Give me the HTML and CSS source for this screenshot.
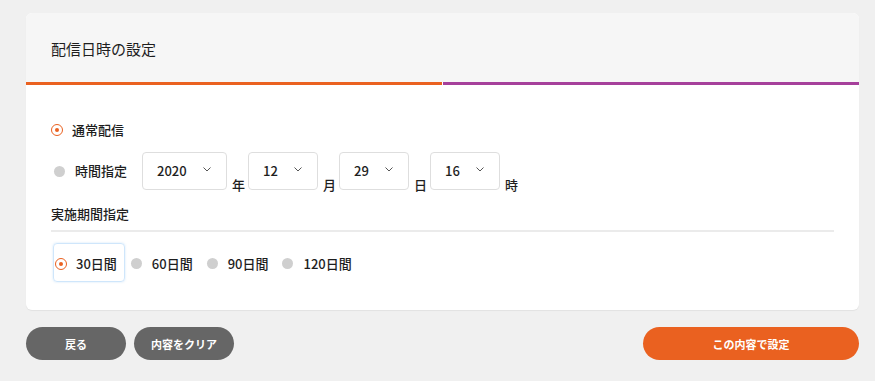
FILE: index.html
```html
<!DOCTYPE html>
<html lang="ja">
<head>
<meta charset="utf-8">
<title>配信日時の設定</title>
<link rel="stylesheet" href="styles.css">
</head>
<body>
<div class="page">
  <section class="card">
    <header class="card-head">配信日時の設定</header>
    <div class="progress"><span class="seg seg-orange"></span><span class="seg seg-purple"></span></div>
    <div class="card-body">
      <div class="row row-normal">
        <span class="radio radio-on"></span><span class="label">通常配信</span>
      </div>
      <div class="row row-time">
        <div class="time-label">
          <span class="radio radio-off"></span><span class="label">時間指定</span>
        </div>
        <div class="select sel-year"><span>2020</span><svg class="chev" width="8" height="5" viewBox="0 0 8 5"><polyline points="0.5,0.5 4,4 7.5,0.5" fill="none" stroke="#555" stroke-width="1"/></svg></div>
        <span class="unit">年</span>
        <div class="select sel-small"><span>12</span><svg class="chev" width="8" height="5" viewBox="0 0 8 5"><polyline points="0.5,0.5 4,4 7.5,0.5" fill="none" stroke="#555" stroke-width="1"/></svg></div>
        <span class="unit">月</span>
        <div class="select sel-small"><span>29</span><svg class="chev" width="8" height="5" viewBox="0 0 8 5"><polyline points="0.5,0.5 4,4 7.5,0.5" fill="none" stroke="#555" stroke-width="1"/></svg></div>
        <span class="unit">日</span>
        <div class="select sel-small"><span>16</span><svg class="chev" width="8" height="5" viewBox="0 0 8 5"><polyline points="0.5,0.5 4,4 7.5,0.5" fill="none" stroke="#555" stroke-width="1"/></svg></div>
        <span class="unit">時</span>
      </div>
      <div class="section-title">実施期間指定</div>
      <div class="divider"></div>
      <div class="periods">
        <label class="period focused"><span class="radio radio-on"></span><span class="label">30日間</span></label>
        <label class="period"><span class="radio radio-off"></span><span class="label">60日間</span></label>
        <label class="period"><span class="radio radio-off"></span><span class="label">90日間</span></label>
        <label class="period"><span class="radio radio-off"></span><span class="label">120日間</span></label>
      </div>
    </div>
  </section>
  <div class="actions">
    <div class="actions-left">
      <button class="btn btn-grey">戻る</button>
      <button class="btn btn-grey">内容をクリア</button>
    </div>
    <button class="btn btn-orange">この内容で設定</button>
  </div>
</div>
</body>
</html>
```
FILE: styles.css
```css
* { box-sizing: border-box; }
html, body { margin: 0; padding: 0; }
body {
  background: #f0f0f0;
  font-family: "Noto Sans CJK JP", "Noto Sans", sans-serif;
  color: #1e1e1e;
  width: 875px;
  height: 381px;
  overflow: hidden;
}
.page {
  padding: 13px 16px 0 26px;
}
.card {
  background: #fff;
  border-radius: 6px;
  overflow: hidden;
  box-shadow: 0 1px 1px rgba(0,0,0,0.06);
}
.card-head {
  height: 69px;
  background: #f6f6f6;
  padding-left: 25px;
  display: flex;
  align-items: center;
  font-size: 15px;
  padding-top: 1px;
}
.progress {
  display: flex;
  gap: 1px;
  height: 3px;
  background: #fff;
}
.seg { flex: 1; display: block; }
.seg-orange { background: #ea6120; }
.seg-purple { background: #a6409b; }
.card-body {
  padding: 35px 25px 28px 25px;
}
.row { display: flex; align-items: center; }
.row-normal { height: 20px; }
.label { font-size: 13px; line-height: 20px; font-weight: 500; }
.radio {
  display: inline-block;
  width: 11px;
  height: 11px;
  border-radius: 50%;
  flex: none;
}
.radio-on {
  width: 12px;
  height: 12px;
  border: 1.6px solid #ea6120;
  position: relative;
}
.radio-on::after {
  content: "";
  position: absolute;
  left: 50%;
  top: 50%;
  width: 4px;
  height: 4px;
  margin: -2px 0 0 -2px;
  border-radius: 50%;
  background: #ea6120;
}
.radio-off { background: #cfcfcf; }
.row-normal .radio { margin-right: 9px; }
.row-time {
  margin-top: 12px;
  align-items: flex-end;
}
.time-label {
  display: flex;
  align-items: center;
  height: 38px;
  padding-left: 3px;
  width: 91px;
}
.time-label .radio { margin-right: 10px; }
.select {
  height: 38px;
  border: 1px solid #dedede;
  border-radius: 4px;
  display: flex;
  align-items: center;
  justify-content: space-between;
  padding: 0 15px 0 14px;
  font-size: 13px;
  font-weight: 500;
}
.select span { line-height: 20px; }
.chev { display: block; margin-top: -3px; }
.sel-year { width: 85px; }
.sel-small { width: 70px; }
.unit {
  font-size: 13px;
  font-weight: 500;
  line-height: 13px;
  margin: 0 3px -1px 5px;
}
.section-title {
  margin-top: 14px;
  font-size: 13px;
  font-weight: 500;
  line-height: 20px;
}
.divider {
  margin-top: 6px;
  height: 2px;
  background: #ebebeb;
}
.periods {
  margin-top: 11px;
  margin-left: 2px;
  display: flex;
  gap: 4px;
}
.period {
  display: flex;
  align-items: center;
  height: 39px;
  padding: 2px 7px 0 1px;
  border: 1px solid transparent;
  border-radius: 4px;
}
.period .radio { margin-right: 10px; }
.period.focused .radio { margin-right: 9px; }
.period.focused {
  border-color: #cfe6fb;
  box-shadow: 0 0 2px rgba(150, 200, 245, 0.5);
}
.actions {
  margin-top: 17px;
  display: flex;
  justify-content: space-between;
}
.actions-left { display: flex; gap: 8px; }
.btn {
  height: 33px;
  border: none;
  border-radius: 17px;
  color: #fff;
  font-family: "Noto Sans CJK JP", "Noto Sans", sans-serif;
  font-size: 11px;
  font-weight: bold;
  padding: 0;
  cursor: pointer;
}
.btn-grey { background: #666; width: 100px; }
.btn-orange { background: #ea6120; width: 216px; }
```
